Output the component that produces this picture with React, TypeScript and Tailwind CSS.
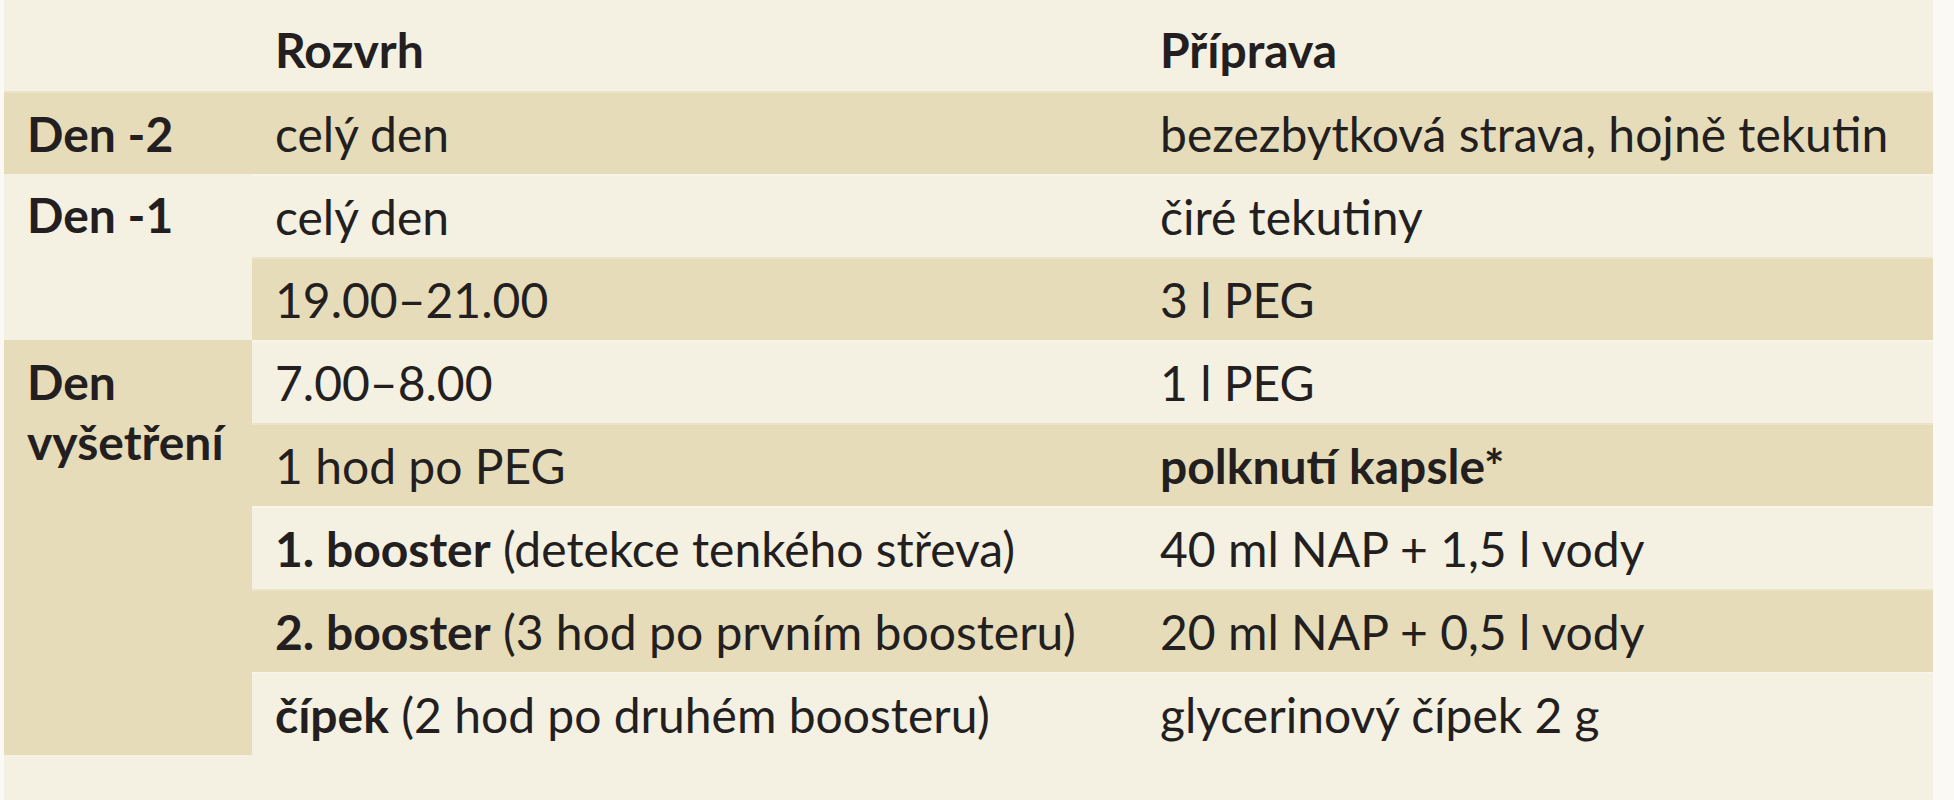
import React from "react";

type Part = { text: string; bold?: boolean };
type Row = { time: Part[]; prep: Part[]; dark: boolean };

const rows: Row[] = [
  { time: [{ text: "celý den" }], prep: [{ text: "bezezbytková strava, hojně tekutin" }], dark: true },
  { time: [{ text: "celý den" }], prep: [{ text: "čiré tekutiny" }], dark: false },
  { time: [{ text: "19.00–21.00" }], prep: [{ text: "3 l PEG" }], dark: true },
  { time: [{ text: "7.00–8.00" }], prep: [{ text: "1 l PEG" }], dark: false },
  { time: [{ text: "1 hod po PEG" }], prep: [{ text: "polknutí kapsle*", bold: true }], dark: true },
  {
    time: [{ text: "1. booster", bold: true }, { text: " (detekce tenkého střeva)" }],
    prep: [{ text: "40 ml NAP + 1,5 l vody" }],
    dark: false,
  },
  {
    time: [{ text: "2. booster", bold: true }, { text: " (3 hod po prvním boosteru)" }],
    prep: [{ text: "20 ml NAP + 0,5 l vody" }],
    dark: true,
  },
  {
    time: [{ text: "čípek", bold: true }, { text: " (2 hod po druhém boosteru)" }],
    prep: [{ text: "glycerinový čípek 2 g" }],
    dark: false,
  },
];

function Text({ parts }: { parts: Part[] }) {
  return (
    <span className="whitespace-pre">
      {parts.map((p, i) => (
        <span key={i} className={p.bold ? "font-bold" : "font-normal"}>
          {p.text}
        </span>
      ))}
    </span>
  );
}

export default function App() {
  return (
    <div className="w-[1954px] h-[800px] bg-[#fbf9f3] pl-1 font-['Lato',sans-serif] text-[48px] leading-[1.2] text-[#231f20]">
      <div className="w-[1929px] h-[800px] bg-[#f4f0e2]">
        <div className="grid grid-cols-[248px_885px_796px] grid-rows-[91px_repeat(8,83px)]">
          {/* hlavička */}
          <div />
          <div className="flex items-center pt-2 pl-[23px] font-bold">Rozvrh</div>
          <div className="flex items-center pt-2 pl-[23px] font-bold">Příprava</div>

          {/* levý sloupec */}
          <div className="col-start-1 row-start-2 flex items-center pl-[23px] font-bold bg-[#e6dcba] border-t-2 border-[#ece4c9]">
            Den -2
          </div>
          <div className="col-start-1 row-start-3 row-span-2 pt-[11px] pl-[23px] font-bold leading-[60px]">
            Den -1
          </div>
          <div className="col-start-1 row-start-5 row-span-5 pt-[12px] pl-[23px] font-bold bg-[#e6dcba] leading-[60px]">
            <div>Den</div>
            <div>vyšetření</div>
          </div>

          {rows.map((r, i) => (
            <React.Fragment key={i}>
              <div
                className={
                  "col-start-2 flex items-center pl-[23px] border-t-2 " +
                  (r.dark ? "bg-[#e6dcba] border-[#ece4c9]" : "bg-[#f4f0e2] border-[#f7f4ea]")
                }
                style={{ gridRowStart: i + 2 }}
              >
                <Text parts={r.time} />
              </div>
              <div
                className={
                  "col-start-3 flex items-center pl-[23px] border-t-2 " +
                  (r.dark ? "bg-[#e6dcba] border-[#ece4c9]" : "bg-[#f4f0e2] border-[#f7f4ea]")
                }
                style={{ gridRowStart: i + 2 }}
              >
                <Text parts={r.prep} />
              </div>
            </React.Fragment>
          ))}
        </div>
      </div>
    </div>
  );
}
